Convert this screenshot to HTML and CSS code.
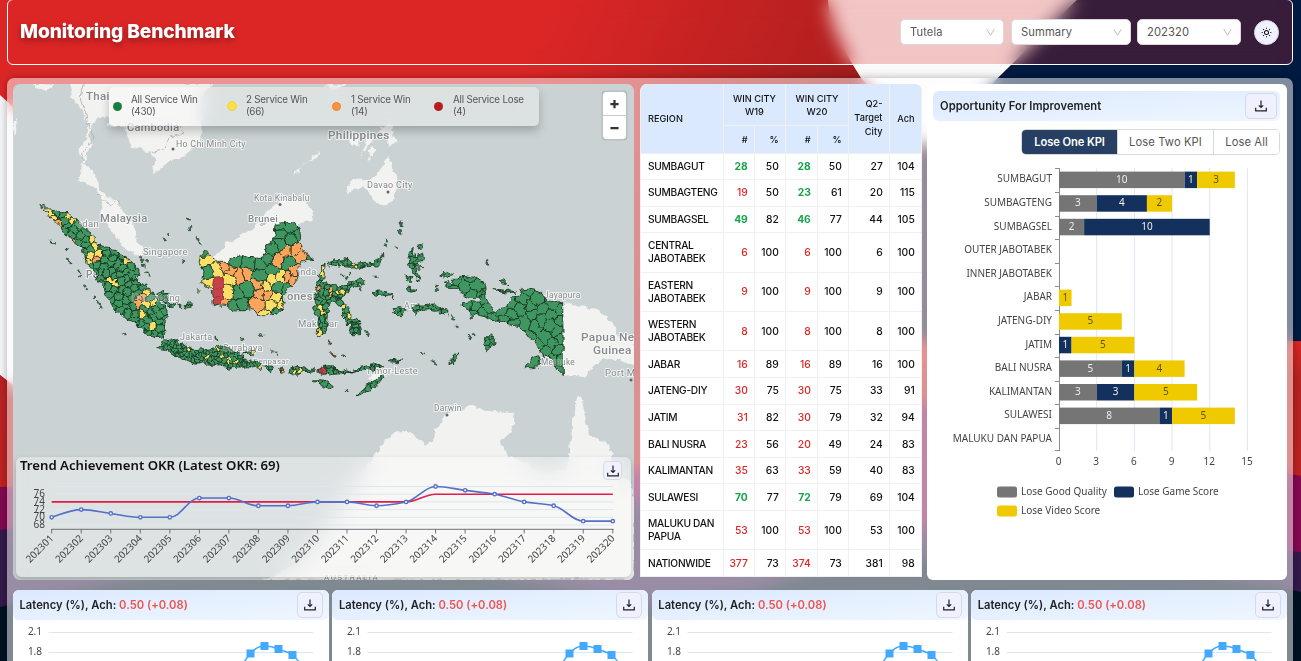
FILE: index.html
```html
<!DOCTYPE html>
<html lang="en">
<head>
<meta charset="utf-8">
<title>Monitoring Benchmark</title>
<link rel="stylesheet" href="styles.css">
</head>
<body>
<svg class="backdrop" viewBox="0 0 1301 661" preserveAspectRatio="none" aria-hidden="true">
  <defs>
    <linearGradient id="redTop" x1="0" y1="0" x2="1" y2="0.25"><stop offset="0.4" stop-color="#dc2626"/><stop offset="0.68" stop-color="#991b1b"/></linearGradient>
    <linearGradient id="redLow" x1="0" y1="0" x2="0" y2="1"><stop offset="0" stop-color="#dc2626"/><stop offset="0.12" stop-color="#b92222"/><stop offset="1" stop-color="#c62424"/></linearGradient>
  </defs>
  <rect width="1301" height="661" fill="url(#redTop)"/>
  <path d="M0 95 L60 150 L60 420 L0 375Z" fill="#f5f6f8"/>
  <path d="M828 0 Q829 25 853 65 L861 78 L925 150 L1077 0Z" fill="#fafafa"/>
  <path d="M1077 0 H1301 V342 L920 352 V155Z" fill="#001a41"/>
  <path d="M0 375 L60 425 L640 380 L925 340 L1301 341 V661 H0Z" fill="url(#redLow)"/>
  <path d="M0 487 L330 480 L637 470 L925 402 L1301 476 V661 H0Z" fill="#830a50"/>
  <path d="M0 530 L330 480 L637 500 L925 530 L1301 552 V661 H0Z" fill="#331a4b"/>
  <path d="M0 607 L130 578 L434 560 L520 580 L637 604 L750 592 L850 560 L1000 556 L1200 572 L1301 592 V661 H0Z" fill="#001122"/>
</svg>

<header class="topbar">
  <h1 class="title">Monitoring Benchmark</h1>
  <div class="filters">
    <div class="select s1">Tutela<svg class="chev" viewBox="0 0 10 10"><path d="M.8 1.3 5 8 9.200 1.300"/></svg></div>
    <div class="select s2">Summary<svg class="chev" viewBox="0 0 10 10"><path d="M.8 1.3 5 8 9.200 1.300"/></svg></div>
    <div class="select s3">202320<svg class="chev" viewBox="0 0 10 10"><path d="M.8 1.3 5 8 9.200 1.300"/></svg></div>
    <button class="sun" aria-label="Theme"><svg viewBox="0 0 12 12"><circle cx="6" cy="6" r="2.200"/><path d="M6 .7v1.200M6 10.100v1.200M.7 6h1.200M10.100 6h1.200M2.250 2.250l.85.85M8.900 8.900l.85.85M2.250 9.750l.85-.85M8.900 3.100l.85-.85"/></svg></button>
  </div>
</header>

<main class="panel">
  <section class="row">
    <div class="map-card">
      <svg class="map" id="map" viewBox="13 84 621 496"></svg>
      <div class="legend">
        <div class="lg l1"><i class="dot green"></i><span>All Service Win<br>(430)</span></div>
        <div class="lg l2"><i class="dot yellow"></i><span>2 Service Win<br>(66)</span></div>
        <div class="lg l3"><i class="dot orange"></i><span>1 Service Win<br>(14)</span></div>
        <div class="lg l4"><i class="dot red"></i><span>All Service Lose<br>(4)</span></div>
      </div>
      <div class="zoomer"><button>+</button><button>−</button></div>
      <div class="trend">
        <h2>Trend Achievement OKR (Latest OKR: 69)</h2>
        <button class="dl small" aria-label="Download"></button>
        <svg id="trend" viewBox="16 480 615 97"></svg>
      </div>
    </div>

    <table class="regions">
      <colgroup><col class="c1"><col class="c2"><col class="c3"><col class="c4"><col class="c5"><col class="c6"><col class="c7"></colgroup>
      <thead>
        <tr class="h1"><th rowspan="2" class="reg">REGION</th><th colspan="2" class="mid">WIN CITY<br>W19</th><th colspan="2" class="mid">WIN CITY<br>W20</th><th rowspan="2" class="tall">Q2-<br>Target<br>City</th><th rowspan="2">Ach</th></tr>
        <tr class="h2"><th>#</th><th>%</th><th>#</th><th>%</th></tr>
      </thead>
      <tbody id="rows"></tbody>
    </table>

    <section class="improve">
      <div class="card-head inset"><h2>Opportunity For Improvement</h2><button class="dl" aria-label="Download"></button></div>
      <div class="tabs"><button class="on">Lose One KPI</button><button>Lose Two KPI</button><button>Lose All</button></div>
      <svg id="bars" viewBox="927 160 360 370"></svg>
    </section>
  </section>

  <section class="cards" id="cards"></section>
</main>
<script src="script.js"></script>
</body>
</html>
```
FILE: styles.css
```css
* { box-sizing: border-box; }
body { margin: 0; width: 1301px; height: 661px; overflow: hidden; position: relative; font-family: Inter, "Liberation Sans", sans-serif; color: #111; background: #001122; }
button { font-family: inherit; padding: 0; }
h1, h2 { margin: 0; }
.backdrop { position: absolute; inset: 0; width: 1301px; height: 661px; }

.topbar { position: relative; margin: -1px 8px 0 7px; height: 66px; border: 1px solid #fff; border-radius: 6px; display: flex; align-items: center; justify-content: space-between; padding: 0 13px 0 12px; background: rgba(220, 38, 38, .25); backdrop-filter: blur(9px); }
.title { font-size: 19.2px; font-weight: 800; letter-spacing: -.15px; padding-bottom: 2px; color: #fff; text-shadow: 0 3px 6px rgba(0, 0, 0, .35); }
.filters { display: flex; align-items: center; }
.select { height: 26px; background: #fff; border: 1px solid #d9d9d9; border-radius: 5px; display: flex; align-items: center; justify-content: space-between; padding: 0 8px 0 9px; font-size: 11.2px; letter-spacing: .1px; color: #555; }
.s1 { width: 104px; margin-right: 7px; }
.s2 { width: 120px; margin-right: 6px; }
.s3 { width: 104px; margin-right: 13px; }
.chev { width: 9px; height: 9px; fill: none; stroke: #b5b5b5; stroke-width: 1; }
.sun { width: 25px; height: 25px; border-radius: 50%; border: 1px solid #dcdce6; background: #f0f1ff; display: grid; place-items: center; }
.sun svg { width: 11px; height: 11px; fill: none; stroke: #111; stroke-width: 1.1; }

.panel { position: relative; margin: 13px 8px 0 7px; height: 583px; padding: 6px 6px 0; border-radius: 7px 7px 0 0; background: rgba(255, 255, 255, .5); backdrop-filter: blur(7px); box-shadow: 0 0 8px rgba(0, 0, 0, .3); }
.row { display: flex; height: 496px; align-items: flex-start; }

.map-card { position: relative; width: 621px; height: 496px; border-radius: 7px; overflow: hidden; background: #cad2d3; margin-right: 6px; }
.map { display: block; width: 621px; height: 496px; }
.map text { font-family: Roboto, "Open Sans", sans-serif; fill: #868a8c; paint-order: stroke; stroke: rgba(250, 250, 250, .8); stroke-width: 2px; stroke-linejoin: round; }
.legend { position: absolute; left: 96px; top: 3px; width: 430px; height: 39px; border-radius: 5px; background: rgba(255, 255, 255, .34); backdrop-filter: blur(9px); box-shadow: 0 5px 10px rgba(0, 0, 0, .22); display: flex; align-items: center; font-size: 9.8px; line-height: 12.5px; letter-spacing: -.22px; color: #555; white-space: nowrap; }
.lg { display: flex; align-items: center; padding-bottom: 1px; }
.dot { width: 9px; height: 9px; border-radius: 50%; }
.dot.green { background: #15803d; } .dot.yellow { background: #fde047; border: 1px solid #f3ce35; } .dot.orange { background: #fb923c; border: 1px solid #ee8230; } .dot.red { background: #b91c1c; }
.l1 { width: 114px; padding-left: 4px; gap: 9px; } .l2 { width: 105px; padding-left: 4px; gap: 9px; } .l2 .dot { width: 10px; height: 10px; } .l3 { width: 101px; padding-left: 4px; gap: 10px; } .l4 { padding-left: 5px; gap: 10px; }
.zoomer { position: absolute; right: 7px; top: 7px; width: 25px; height: 49px; display: flex; flex-direction: column; background: #fff; border: 1px solid #b9c0c1; border-radius: 4px; box-shadow: 0 0 1px rgba(0, 0, 0, .4); }
.zoomer button { flex: 1; border: 0; background: none; font-size: 16px; line-height: 18px; padding-bottom: 2px; font-weight: 800; color: #333; }
.zoomer button + button { border-top: 1px solid #ccc; }
.trend { position: absolute; left: 3px; top: 373px; width: 615px; height: 120px; border-radius: 6px; background: rgba(255, 255, 255, .36); backdrop-filter: blur(12px); box-shadow: 0 3px 6px rgba(0, 0, 0, .2); padding-top: 23px; }
.trend h2 { position: absolute; left: 4px; top: -1px; font: 600 13.2px/19px "Noto Sans", sans-serif; color: #111; white-space: nowrap; }
.trend svg { display: block; width: 615px; height: 97px; }

.dl { width: 32px; height: 26px; border: 1px solid #d9d9e3; border-radius: 5px; background: #f0f1ff; display: grid; place-items: center; }
.dl svg { width: 12px; height: 12px; fill: none; stroke: #222; stroke-width: 1.2; }
.trend .dl svg { width: 12px; height: 12px; }
.dl.small { position: absolute; right: 9px; top: 4px; width: 19px; height: 19px; border-radius: 4px; }

.regions { width: 282px; table-layout: fixed; border-collapse: separate; border-spacing: 0; background: #fff; border-radius: 7px 7px 0 0; overflow: hidden; margin-right: 5px; font-size: 10.2px; line-height: 13px; border-left: 1px solid #f0f0f0; }
.c1 { width: 83px; } .c2 { width: 31px; } .c3 { width: 31px; } .c4 { width: 32px; } .c5 { width: 31px; } .c6 { width: 41px; } .c7 { width: 32px; }
.regions th { background: #dbe9ff; font-weight: 500; font-size: 9.2px; text-align: right; padding: 0 6.5px 0 0; border-right: 1px solid #f0f0f0; border-bottom: 1px solid #f0f0f0; }
.regions .mid { text-align: center; padding: 0; }
.regions .tall { line-height: 14px; }
.regions .h1 { height: 42px; } .regions .h2 { height: 27.500px; }
.regions td { text-align: right; padding: 0 6.2px 0 0; border-right: 1px solid #f0f0f0; border-bottom: 1px solid #f0f0f0; font-weight: 500; font-size: 10.300px; letter-spacing: 0; }
.regions .reg { text-align: left; padding: 0 0 0 7px; }
.regions td.reg { font-size: 10.200px; letter-spacing: -.28px; }
.regions .up { color: #16a34a; font-weight: 700; } .regions .down { color: #dc2626; }
.regions .one { height: 26.6px; } .regions .two { height: 39.4px; }

.improve { width: 360px; height: 496px; border-radius: 6px; background: #fff; padding: 7px 7px 0 6px; }
.card-head { height: 30px; display: flex; align-items: center; justify-content: space-between; background: linear-gradient(175deg, #dbe9ff, #eff6ff); border-radius: 6px; padding: 0 6px; }
.card-head h2 { font-size: 11.200px; font-weight: 600; letter-spacing: .05px; color: #222; white-space: nowrap; }
.mini .card-head h2 { letter-spacing: .02px; padding-left: .5px; }
.card-head em { font-style: normal; color: #ef5350; }
.inset { padding: 0 3px 0 7px; }
.tabs { display: flex; width: 259px; height: 26px; margin: 8px 0 0 88px; border: 1px solid #d9d9d9; border-radius: 5px; overflow: hidden; }
.tabs button { flex: 0 0 96px; border: 0; border-right: 1px solid #d9d9d9; background: #fff; font-size: 11.200px; letter-spacing: .1px; color: #555; }
.tabs .on { background: #263f62; color: #fff; font-weight: 600; letter-spacing: -.1px; }
.tabs button:last-child { flex: 1; border-right: 0; }
#bars { display: block; width: 360px; height: 370px; margin: 5px 0 0 -6px; }
.chart-text { font-family: "Noto Sans", "Open Sans", sans-serif; font-size: 10px; fill: #444; }

.cards { display: grid; grid-template-columns: repeat(4, 316px); column-gap: 3.400px; margin-top: 10px; }
.mini { height: 71px; background: #fff; border-radius: 6px 6px 0 0; }
.mini .dl { width: 26px; }
.mini svg.plot { display: block; width: 316px; height: 41px; }
```
FILE: script.js
```js
const NS = 'http://www.w3.org/2000/svg';
const pts = a => a.map(p => p[0].toFixed(1) + ',' + p[1].toFixed(1)).join(' ');
let seed = 11;
const rnd = () => (seed = (seed * 16807) % 2147483647) / 2147483647;

// "x y x y ..." in thirds of a pixel, from an origin
const shape = (s, ox = 0, oy = 190) => {
  const n = s.trim().split(/\s+/).map(Number), out = [];
  for (let i = 0; i < n.length; i += 2) out.push([ox + n[i] / 3, oy + n[i + 1] / 3]);
  return out;
};
// roughens a coastline by displacing edge midpoints; long straight borders stay straight
const rough = (p, k) => {
  for (let r = 0; r < 2; r++) {
    const o = [];
    p.forEach((a, i) => {
      const b = p[(i + 1) % p.length], dx = b[0] - a[0], dy = b[1] - a[1], len = Math.hypot(dx, dy);
      const t = Math.abs(dx) < 2 && len > 18 ? 0 : (rnd() - .5) * Math.min(k, 5 / (len + .1));
      o.push(a, [(a[0] + b[0]) / 2 - dy * t, (a[1] + b[1]) / 2 + dx * t]);
    });
    p = o;
  }
  return p;
};
const inside = (x, y, p) => {
  let c = false;
  for (let i = 0, j = p.length - 1; i < p.length; j = i++)
    if ((p[i][1] > y) !== (p[j][1] > y) && x < (p[j][0] - p[i][0]) * (y - p[i][1]) / (p[j][1] - p[i][1]) + p[i][0]) c = !c;
  return c;
};
const halfPlane = (poly, a, b) => {
  const mx = (a[0] + b[0]) / 2, my = (a[1] + b[1]) / 2, nx = b[0] - a[0], ny = b[1] - a[1];
  const f = p => (p[0] - mx) * nx + (p[1] - my) * ny, o = [];
  poly.forEach((p, i) => {
    const q = poly[(i + 1) % poly.length], fp = f(p), fq = f(q);
    if (fp <= 0) o.push(p);
    if (fp * fq < 0) { const t = fp / (fp - fq); o.push([p[0] + (q[0] - p[0]) * t, p[1] + (q[1] - p[1]) * t]); }
  });
  return o;
};
const COLORS = { g: '#409660', y: '#fcdf66', o: '#fca35c', r: '#c5434a' };

const land = [
  shape('205 252 215 290 240 320 265 390 240 440 250 480 235 545 280 560 310 600 300 640 330 690 360 725 400 760 422 775 430 755 405 715 400 670 370 635 350 600 320 590 298 570 282 510 250 490 275 430 265 400 290 350 325 352 325 380 375 380 390 430 400 445 450 460 470 480 457 520 500 490 550 470 600 420 605 376 600 300 640 252', 0, 0),
  shape('95 252 160 252 150 268 120 270', 0, 0), shape('45 360 53 350 48 400 40 410', 0, 0),
  shape('675 160 740 130 770 100 800 60 830 40 850 25 900 30 940 60 930 95 895 100 880 150 830 160 800 195 760 208 720 200 680 218 635 205'),
  shape('880 525 920 490 960 450 955 465 895 520', 0, 0),
  shape('1040 400 1080 395 1075 440 1050 430', 0, 0), shape('1090 400 1120 395 1100 440 1080 480', 0, 0), shape('1140 380 1180 370 1190 430 1165 440', 0, 0), shape('1110 440 1130 445 1105 490', 0, 0),
  shape('970 260 1000 252 1040 252 1010 268', 0, 0),
  shape('1045 560 1060 540 1100 540 1140 510 1165 470 1185 520 1190 560 1180 600 1155 620 1125 605 1110 580 1085 560 1050 575 1040 590', 0, 0),
  shape('730 340 800 348 850 375 885 405 892 440 945 440 945 530 900 510 850 508 810 540 800 558 730 560', 320),
  shape('145 560 190 545 235 540 190 560 150 590', 320),
  [[262,580],[300,560],[330,520],[355,480],[375,453],[385,440],[403,431],[415,437],[425,445],[434,440],[442,420],[452,412],[470,405],[490,410],[515,413],[511,433],[500,443],[505,452],[515,458],[540,472],[566,470],[569,450],[572,420],[575,402],[579,395],[584,410],[590,435],[600,440],[610,447],[612,460],[624,478],[634,490],[634,580]]
];

// outline, x origin, district spacing, coloured districts
const islands = [
  ['130 57 150 57 175 68 205 68 225 85 240 105 262 120 285 140 300 170 325 172 350 182 375 200 395 215 410 232 420 255 412 275 440 285 450 308 472 322 485 345 495 350 494 400 490 445 465 440 440 435 415 412 385 390 355 365 330 335 310 295 290 260 262 220 255 195 235 170 215 150 200 130 175 105 150 85', 0, 6.5,
    'y155,75 y158,84 y212,88 y208,80 y275,150 y285,165 y298,190 y265,215 y270,200 y345,280 y325,268 y440,340 y460,338 y425,372 y457,410 y440,310 y380,210 o172,105 o220,155 o287,208 o420,325 o432,320 o415,342'],
  ['470 310 490 298 505 310 500 325 525 340 520 352 500 345 480 330', 0, 5, ''], ['550 345 565 335 575 345 570 357 552 355', 0, 5, ''],
  ['470 475 490 450 530 452 560 462 580 478 610 482 650 480 660 466 690 475 700 490 730 495 725 510 770 515 785 525 782 542 740 530 700 532 650 522 610 515 560 510 510 492 495 478', 0, 3.7,
    'y565,480 y620,505 y685,503 y683,520 y655,480 y775,535 y668,500 y710,515'],
  ['725 490 770 486 755 495', 0, 6, 'y765,487'], ['790 528 820 530 812 545', 0, 4, ''], ['835 540 850 530 852 552', 0, 4, 'r846,535 y845,548'], ['865 540 880 535 910 535 905 550 880 557', 0, 5, 'y885,546 y900,542'],
  ['895 530 915 530 943 538 930 550 910 545', 0, 4, ''], ['950 542 970 534 1005 534 1010 545 975 552', 0, 4, 'r965,542 r980,542 r1000,542'],
  ['600 200 615 180 625 197 655 215 685 215 720 195 770 205 795 195 800 165 825 140 825 105 850 98 885 98 900 125 895 155 910 175 938 210 905 215 890 240 890 265 880 285 865 290 850 320 845 345 848 360 830 375 790 380 760 360 735 362 695 362 670 345 640 347 635 310 632 290 600 280 608 255 600 225', 0, 11,
    'y618,212 y648,238 y690,268 y682,305 y632,283 y840,262 y818,270 y800,290 y800,378 y825,325 y842,345 y820,342 o675,225 o695,245 o738,250 o718,256 o865,178 o882,178 o908,198 o832,215 o862,262 o885,245 o882,268 o775,285 o782,310 o804,312 o770,345 o672,342 r652,285 r652,308 r652,332 g715,310 g740,300 g625,245 g700,215 g745,220'],
  ['20 220 45 203 85 210 120 218 150 220 170 205 190 187 188 205 165 228 130 234 85 228 50 230 28 228', 320, 4.500, 'y100,222 y110,228 y150,234 y135,233'],
  ['5 225 15 222 12 260 5 285 20 275 28 290 60 290 95 275 130 268 128 280 100 288 80 310 55 328 75 340 90 360 92 385 110 385 118 395 108 410 75 400 65 375 60 350 40 335 25 350 22 380 22 420 0 440 -8 435 -3 380 -22 355 -12 330 -12 285 0 250', 320, 5,
    'y12,235 y8,255 y55,308 y70,305 y70,350 y85,378 y5,355 y8,370 y0,430 o30,300 o32,310 o-3,295'],
  ['95 405 120 400 120 430 100 438 90 425', 320, 4, ''],
  ['270 185 280 175 285 200 308 195 310 212 290 215 312 232 285 234 297 275 280 250 268 220', 320, 6, ''], ['295 165 308 158 308 172 295 177', 320, 6, ''],
  ['255 255 275 260 270 275 258 270', 320, 4, ''], ['160 310 215 310 220 330 212 315 165 315', 320, 6, ''], ['262 295 288 300 268 305', 320, 6, ''],
  ['217 355 240 350 260 362 245 377 222 370', 320, 6, ''], ['280 355 300 345 345 345 380 360 382 378 355 362 320 360 285 370', 320, 6, ''],
  ['497 440 512 430 522 465 500 482 493 460', 320, 4, ''], ['385 520 400 495 420 490 400 522', 320, 5, ''], ['208 515 245 510 235 518', 320, 5, ''],
  ['0 536 30 532 80 540 130 530 190 528 150 540 90 545 40 553 0 548', 320, 5, 'r10,542 r-2,542'],
  ['-22 572 10 570 40 590 30 600 0 585', 320, 6, ''], ['108 620 125 600 150 575 190 555 180 575 160 595 130 608', 320, 6, ''],
  ['362 255 380 247 400 253 385 262', 320, 6, ''],
  ['370 280 385 275 400 280 400 268 435 260 460 262 490 275 495 300 485 322 450 325 430 315 415 298 385 298', 320, 12, ''],
  ['485 300 500 330 515 360 530 365 560 350 575 322 600 318 598 303 625 298 665 310 680 330 728 338 730 560 700 525 690 500 670 498 650 470 640 450 615 430 605 415 560 400 520 392 485 378 470 372 450 385 455 365 425 345 450 335 480 335', 320, 11, ''],
  ['615 535 635 505 660 498 655 532', 320, 14, ''], ['537 270 560 275 570 287 545 280', 320, 6, ''], ['520 296 590 306 540 305', 320, 9, '']
];
// isolated islets
const specks = 'g125,48 g133,48 g150,152 g158,158 g166,160 g200,176 g205,206 g210,215 g240,245 g238,260 g252,285 g258,298 g282,322 g300,340 g304,352 g370,430 g564,87 g571,112 g568,118 g504,136 g490,148 g595,148 g600,160 g550,213 g425,212 g438,214 g430,225 g440,248 g450,255 g535,345 g540,348 g725,444 g785,436 g650,445 y594,302 y615,288 y815,484 y828,490 g1203,105 g1205,98 g1201,126 g1158,153 g1157,165 g1128,262 g1040,262 g1330,248 g1308,298 g1310,285 g1038,602 g1360,384 g1372,408 g1407,438 g1412,445 g1420,430 g1100,425 g1104,436 r990,452 r990,460 r996,488 r1004,497 r1032,499 g1267,490 g1300,515 g1305,520 g1460,217 g1338,288 g1190,175 g1028,258 g1050,252 g1078,290 g1083,300';
const labels = [
  ['Thai',86,100,11.5],['Cambodia',127,131,11],['Ho Chi Minh City',176,147,8.8],['Philippines',328,139,11.8],['Davao City',367,188,9],['Kota Kinabalu',254,201,8.4],['Brunei',248,222,9.8],['Malaysia',100,222,11.3],['Singapore',143,255,9.4],['edan',77,227,9.5],['Pa',86,278,10],['Palembang',132,301,9],['Jakarta',180,340,9],['Surabaya',223,351,9.1],['Denpasar',253,364,7.9],['anda',295,275,9.2],['onesia',287,300,11.3],['Maka',298,327,9.5],['ar',329,327,9.5],['Jayapura',544,298,8.4],['Papua New',581,341,11.8],['Guinea',593,354,11.8],['Merauke',541,365,8.3],['Port Mo',605,376,9.5],['Timor-Leste',366,374,9.1],['Darwin',434,411,8.4],['Am',404,309,9],['AUSTRALIA',324,580,8]
];

let out = '<defs><filter id="wobble" x="0" y="0" width="100%" height="100%" filterUnits="userSpaceOnUse"><feTurbulence type="fractalNoise" baseFrequency="0.16" numOctaves="2" seed="4"/><feDisplacementMap in="SourceGraphic" scale="6" xChannelSelector="R" yChannelSelector="G"/></filter>', body = '', n = 0;
out = out.replace('x="0" y="0" width="100%" height="100%"', 'x="13" y="84" width="621" height="496"');
body += '<g filter="url(#wobble)">';
land.forEach(p => { body += `<polygon points="${pts(rough(p, .28))}" fill="#f2f2f1"/>`; });
body += '<path d="M83 84 80 98 85 110 88 125 94 138 84 150 81 160M98 194 110 207 116 200 121 203M180 126 183 133 170 138 166 143 165 149 150 153M258 218 263 226 270 217" fill="none" stroke="#a9adae" stroke-width=".8"/></g>';
[[173,149],[280,204.500],[388,192],[140.500,257],[447,415],[631,380]].forEach(c => { body += `<circle cx="${c[0]}" cy="${c[1]}" r="1.500" fill="#666"/>`; });
const drawLabel = (l, o) => { body += `<text x="${l[1]}" y="${l[2]}" font-size="${l[3]}" font-weight="${l[3] > 9.7 ? 500 : 400}" letter-spacing="${l[0] === 'AUSTRALIA' ? 1.5 : .3}" ${o ? 'opacity=".35"' : ''}>${l[0]}</text>`; };
labels.forEach(l => drawLabel(l));
body += '<g filter="url(#wobble)">';
islands.forEach(([s, ox, d, spots]) => {
  const base = shape(s, ox), p = rough(base, d < 6 ? .5 : .3), id = 'isle' + n++;
  const xs = p.map(q => q[0]), ys = p.map(q => q[1]);
  const x0 = Math.min(...xs) - 2, x1 = Math.max(...xs) + 2, y0 = Math.min(...ys) - 2, y1 = Math.max(...ys) + 2;
  const seeds = spots ? spots.split(' ').map(t => { const [a, b] = t.slice(1).split(',').map(Number); return [ox + a / 3, 190 + b / 3, t[0]]; }) : [];
  for (let i = 0; i < 2500; i++) {
    const x = x0 + rnd() * (x1 - x0), y = y0 + rnd() * (y1 - y0);
    if (inside(x, y, p) && seeds.every(q => Math.hypot(q[0] - x, q[1] - y) > d * .8)) seeds.push([x, y, 'g']);
  }
  out += `<clipPath id="${id}"><polygon points="${pts(p)}"/></clipPath>`;
  body += `<g clip-path="url(#${id})">`;
  seeds.forEach(a => {
    let cell = [[x0, y0], [x1, y0], [x1, y1], [x0, y1]];
    seeds.forEach(b => { if (a !== b && cell.length) cell = halfPlane(cell, a, b); });
    if (cell.length) body += `<polygon points="${pts(cell)}" fill="${COLORS[a[2]]}" stroke="${a[2] === 'r' ? '#a3363c' : '#102c1a'}" stroke-width="${d < 5 ? .7 : .8}"/>`;
  });
  body += `</g><polygon points="${pts(p)}" fill="none" stroke="#17351f" stroke-width=".9"/>`;
});
specks.split(' ').forEach(t => {
  const [a, b] = t.slice(1).split(',').map(Number), x = a / 3, y = 190 + b / 3, r = () => .6 + rnd() * 1.400;
  body += `<polygon points="${pts([[x - r(), y - r()], [x + r() * .6, y - r() * .4], [x + r(), y + r()], [x - r() * .4, y + r() * .7]])}" fill="${COLORS[t[0]]}" stroke="#17351f" stroke-width=".7"/>`;
});
body += '</g>';
['Palembang','Surabaya','Merauke','edan'].forEach(k => drawLabel(labels.find(l => l[0] === k), true));
document.getElementById('map').innerHTML = out + '</defs>' + body;

// achievement trend
const val = [70,72,71,70,70,75,75,73,73,74,74,73,74,78,77,76,74,73,69,69];
const goal = val.map((v, i) => i < 13 ? 74 : 76);
const X = i => 51.7 + i * 29.530, Y = v => 517.300 - (v - 70) * 3.850;
const curve = a => {
  const s = a.map((v, i) => {
    if (!i || i === a.length - 1) return 0;
    const l = v - a[i - 1], r = a[i + 1] - v;
    return l * r <= 0 ? 0 : 2 * l * r / (l + r);
  });
  s[0] = (a[1] - a[0]) * 1.2;
  let d = `M${X(0)} ${Y(a[0])}`;
  for (let i = 1; i < a.length; i++) d += `C${X(i - .62)} ${Y(a[i - 1] + s[i - 1] * .38)} ${X(i - .38)} ${Y(a[i] - s[i] * .38)} ${X(i)} ${Y(a[i])}`;
  return d;
};
let t = '';
[68,70,72,74,76,78].forEach(v => {
  t += `<path d="M52 ${Y(v)}H613" stroke="#dfe5ee" stroke-width="1"/>`;
  if (v < 78) t += `<text class="chart-text" x="45" y="${Y(v) + 3}" text-anchor="end">${v}</text>`;
});
t += `<path d="${curve(goal)}" fill="none" stroke="#e11d48" stroke-width="1.600"/><path d="${curve(val)}" fill="none" stroke="#5470c6" stroke-width="1.600"/><path d="M51.500 529.300H613.500" stroke="#6e7079"/>`;
val.forEach((v, i) => {
  t += `<circle cx="${X(i)}" cy="${Y(v)}" r="1.700" fill="#fff" stroke="#5470c6" stroke-width="1.400"/><path d="M${X(i)} 529v4.500" stroke="#6e7079"/><text class="chart-text" transform="translate(${X(i) + 2.500} 539) rotate(-45)" text-anchor="end">${202301 + i}</text>`;
});
document.getElementById('trend').innerHTML = t;

// region table
const data = [['SUMBAGUT',28,50,28,50,27,104],['SUMBAGTENG',19,50,23,61,20,115],['SUMBAGSEL',49,82,46,77,44,105],['CENTRAL<br>JABOTABEK',6,100,6,100,6,100],['EASTERN<br>JABOTABEK',9,100,9,100,9,100],['WESTERN<br>JABOTABEK',8,100,8,100,8,100],['JABAR',16,89,16,89,16,100],['JATENG-DIY',30,75,30,75,33,91],['JATIM',31,82,30,79,32,94],['BALI NUSRA',23,56,20,49,24,83],['KALIMANTAN',35,63,33,59,40,83],['SULAWESI',70,77,72,79,69,104],['MALUKU DAN<br>PAPUA',53,100,53,100,53,100],['NATIONWIDE',377,73,374,73,381,98]];
const rising = new Set(['SUMBAGUT1','SUMBAGUT3','SUMBAGTENG3','SUMBAGSEL1','SUMBAGSEL3','SULAWESI1','SULAWESI3']);
document.getElementById('rows').innerHTML = data.map(r => `<tr class="${r[0].includes('<') ? 'two' : 'one'}">` + r.map((c, i) => `<td class="${i === 0 ? 'reg' : i === 1 || i === 3 ? (rising.has(r[0] + i) ? 'up' : 'down') : ''}">${c}</td>`).join('') + '</tr>').join('');

// stacked bars
const stacks = [['SUMBAGUT',10,1,3],['SUMBAGTENG',3,4,2],['SUMBAGSEL',2,10,0],['OUTER JABOTABEK',0,0,0],['INNER JABOTABEK',0,0,0],['JABAR',0,0,1],['JATENG-DIY',0,0,5],['JATIM',0,1,5],['BALI NUSRA',5,1,4],['KALIMANTAN',3,3,5],['SULAWESI',8,1,5],['MALUKU DAN PAPUA',0,0,0]];
const fills = ['#757575', '#14305c', '#f0ca00'], inks = ['#eee', '#eee', '#5f5310'], U = 12.560, H = 23.600;
let b = '';
[0,3,6,9,12,15].forEach(v => {
  if (v) b += `<path d="M${1059 + v * U} 168V451" stroke="#e0e6f1"/>`;
  b += `<text class="chart-text" x="${1058.500 + v * U}" y="465" text-anchor="middle">${v}</text>`;
});
b += '<path d="M1059.500 168V451" stroke="#8a8c94"/>';
stacks.forEach((r, i) => {
  const y = 168.300 + i * H;
  b += `<path d="M1055 ${Math.round(y) + .5}h4.500" stroke="#8a8c94"/><text class="chart-text" x="1052" y="${y + 14}" text-anchor="end">${r[0]}</text>`;
  let s = 0;
  for (let k = 1; k < 4; k++) if (r[k]) {
    b += `<rect x="${1059 + s * U}" y="${y + 3.300}" width="${r[k] * U}" height="16.500" fill="${fills[k - 1]}"/><text class="chart-text" style="fill:${inks[k - 1]}" x="${1059 + (s + r[k] / 2) * U}" y="${y + 14.500}" text-anchor="middle">${r[k]}</text>`;
    s += r[k];
  }
});
b += '<path d="M1055 450.500h4.500" stroke="#8a8c94"/>';
[['Lose Good Quality',997,492,0],['Lose Game Score',1114,492,1],['Lose Video Score',997,511,2]].forEach(l => {
  b += `<rect x="${l[1]}" y="${l[2] - 5.500}" width="20" height="11" rx="2.500" fill="${fills[l[3]]}"/><text class="chart-text" x="${l[1] + 24}" y="${l[2] + 3}">${l[0]}</text>`;
});
document.getElementById('bars').innerHTML = b;

// latency cards
document.getElementById('cards').innerHTML = '<article class="mini"><div class="card-head"><h2>Latency (%), Ach: <em>0.50 (+0.08)</em></h2><button class="dl" aria-label="Download"></button></div><svg class="plot" viewBox="13 620 316 41"><path d="M48.500 632.500H313.500M48.500 652.500H313.500" stroke="#e0e6f1"/><text class="chart-text" x="42" y="635" text-anchor="end">2.1</text><text class="chart-text" x="42" y="655" text-anchor="end">1.8</text><path d="M236 675C243 664 246 658 250.500 653.500S258 646 264.500 646 273 646.500 278.500 649 287 651 292.500 655 301 665 306 675" fill="none" stroke="#42a9ff" stroke-width="1.500"/><path d="M246.500 649.500h8v8h-8zM260.500 642h8v8h-8zM274.500 645h8v8h-8zM288.500 651h8v8h-8z" fill="#42a9ff"/></svg></article>'.repeat(4);
document.querySelectorAll('.dl').forEach(e => { e.innerHTML = '<svg viewBox="0 0 12 12"><path d="M6 .5V7M3.800 5.300 6 7.500 8.200 5.300M.7 7.800V10.800H11.300V7.800"/></svg>'; });
```
